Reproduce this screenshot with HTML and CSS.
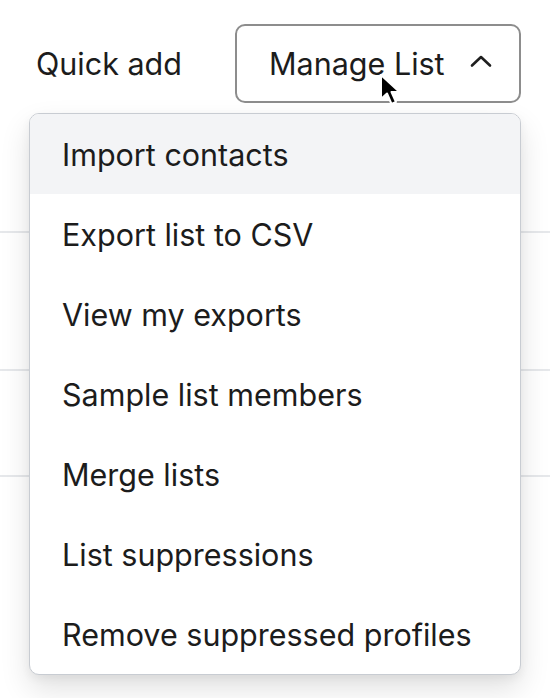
FILE: index.html
```html
<!DOCTYPE html>
<html>
<head>
<meta charset="utf-8">
<link rel="stylesheet" href="styles.css">
</head>
<body>
<div class="page">
  <div class="toolbar">
    <span class="quick">Quick add</span>
    <div class="dd">
      <button class="btn">Manage List
        <svg class="chev" width="22" height="14" viewBox="0 0 22 14"><polyline points="2,11.5 11,3 20,11.5" fill="none" stroke="#1f1f1f" stroke-width="2.6" stroke-linecap="round" stroke-linejoin="round"/></svg>
      </button>
      <ul class="menu">
        <li class="item active">Import contacts</li>
        <li class="item">Export list to CSV</li>
        <li class="item">View my exports</li>
        <li class="item">Sample list members</li>
        <li class="item">Merge lists</li>
        <li class="item">List suppressions</li>
        <li class="item">Remove suppressed profiles</li>
      </ul>
      <svg class="cursor" width="28" height="36" viewBox="0 0 28 36"><path d="M2 2 L2 26 L8 20.5 L12.5 31 L17 29 L12.5 19 L20.5 19 Z" fill="#000" stroke="#fff" stroke-width="2" stroke-linejoin="round"/></svg>
    </div>
  </div>
  <div class="rows">
    <div class="row r1"></div>
    <div class="row r2"></div>
    <div class="row r3"></div>
  </div>
</div>
</body>
</html>
```
FILE: styles.css
```css
html, body {
  margin: 0;
  padding: 0;
  background: #fff;
}
.page {
  width: 550px;
  height: 698px;
  overflow: hidden;
  font-family: Inter, "Noto Sans", sans-serif;
  color: #1c1c1c;
}
.toolbar {
  display: grid;
  grid-template-columns: 199px 286px;
  align-items: center;
  padding: 24px 0 0 36px;
  height: 79px;
}
.quick {
  font-size: 30.5px;
}
.dd {
  position: relative;
}
.btn {
  box-sizing: border-box;
  width: 286px;
  height: 79px;
  border: 2px solid #8d8d8d;
  border-radius: 10px;
  background: #fff;
  font-family: inherit;
  font-size: 30.5px;
  color: #1c1c1c;
  display: flex;
  align-items: center;
  padding: 0 0 0 32px;
}
.chev {
  margin-left: 25px;
  margin-top: -6px;
}
.menu {
  position: absolute;
  top: 89px;
  left: -206px;
  box-sizing: border-box;
  width: 492px;
  margin: 0;
  padding: 0;
  list-style: none;
  background: #fff;
  border: 1.5px solid #c8ccd2;
  border-radius: 10px;
  overflow: hidden;
  box-shadow: 0 14px 30px rgba(0, 0, 0, 0.12), 0 4px 10px rgba(0, 0, 0, 0.05);
  z-index: 2;
}
.item {
  height: 80px;
  display: flex;
  align-items: center;
  padding-left: 32px;
  font-size: 30.5px;
}
.item.active {
  background: #f3f4f6;
}
.cursor {
  position: absolute;
  left: 144px;
  top: 49px;
  z-index: 3;
}
.rows {
  display: flex;
  flex-direction: column;
}
.row {
  border-bottom: 2px solid #e6e8eb;
}
.r1 { height: 128px; }
.r2 { height: 136px; }
.r3 { height: 104px; }
```
